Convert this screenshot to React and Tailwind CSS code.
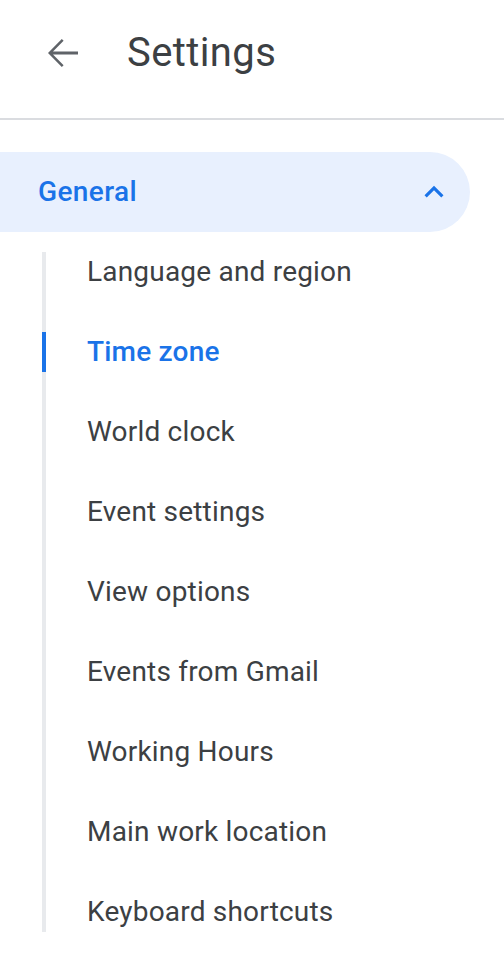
const items = [
  'Language and region',
  'Time zone',
  'World clock',
  'Event settings',
  'View options',
  'Events from Gmail',
  'Working Hours',
  'Main work location',
  'Keyboard shortcuts',
];

const active = 'Time zone';

export default function App() {
  return (
    <div className="w-[504px] h-[956px] bg-white font-['Roboto',sans-serif] overflow-hidden">
      {/* header */}
      <div className="h-[120px] flex items-center border-b-2 border-[#dadce0]">
        <div className="ml-[38px] w-[48px] h-[48px] -mt-[12px] flex items-center justify-center">
          <svg width="48" height="48" viewBox="0 0 24 24" fill="#5f6368">
            <path d="M20 11.2H7.5l5.3-5.3L11.9 5 5 12l6.9 7 .9-.9-5.3-5.3H20z" />
          </svg>
        </div>
        <h1 className="ml-[41px] text-[40px] tracking-[0.4px] text-[#3c4043] leading-none -mt-[12px]">
          Settings
        </h1>
      </div>

      {/* general section */}
      <div className="mt-[32px] h-[80px] w-[470px] bg-[#e8f0fe] rounded-r-full flex items-center justify-between pl-[38px] pr-[17px]">
        <span className="text-[28px] tracking-[0.4px] font-medium text-[#1a73e8]">General</span>
        <svg width="38" height="38" viewBox="0 0 24 24" fill="#1a73e8">
          <path d="M12 8l-6 6 1.41 1.41L12 10.83l4.59 4.58L18 14z" />
        </svg>
      </div>

      <ul className="mt-[20px] ml-[42px] border-l-4 border-[#e8eaed] flex flex-col gap-[40px]">
        {items.map((item) => {
          const on = item === active;
          return (
            <li
              key={item}
              className={
                'relative h-[40px] flex items-center pl-[41px] text-[28px] tracking-[0.2px] ' +
                (on ? 'text-[#1a73e8] font-medium' : 'text-[#3c4043]')
              }
            >
              {on && (
                <span className="absolute -left-[4px] top-0 w-[4px] h-[40px] bg-[#1a73e8]" />
              )}
              {item}
            </li>
          );
        })}
      </ul>
    </div>
  );
}
